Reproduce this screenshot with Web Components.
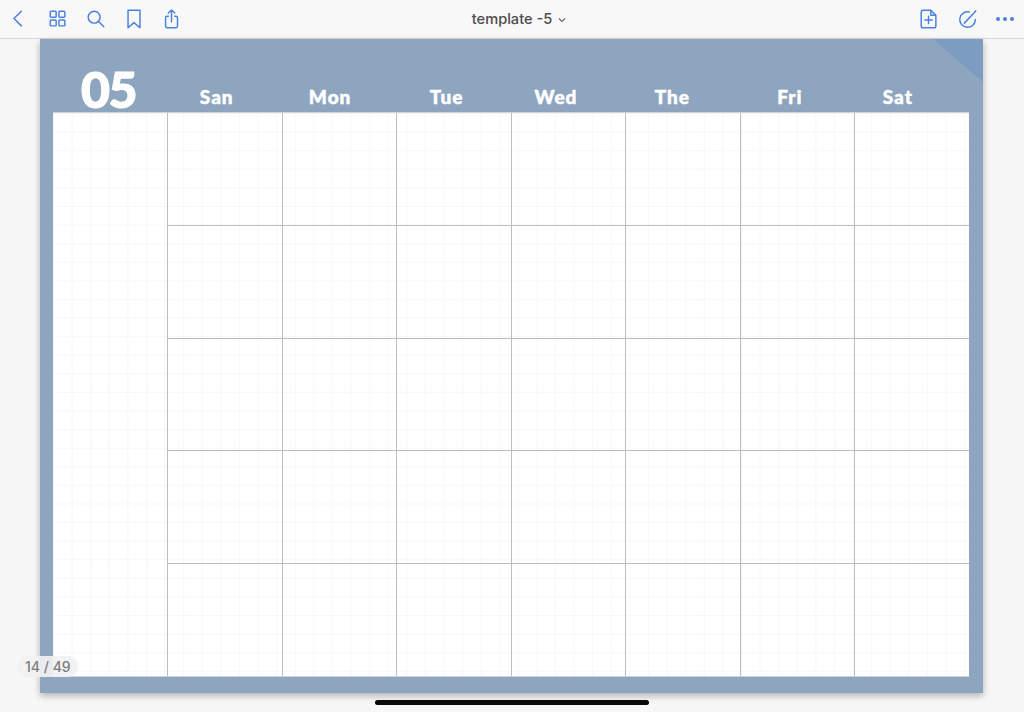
<!DOCTYPE html>
<html><head><meta charset="utf-8">
<style>
html,body{margin:0;padding:0;height:712px;overflow:hidden;background:#f7f7f7}
</style></head>
<body>
<pdf-viewer>
<tool-bar slot="bar" title-text="template -5"></tool-bar>
<cal-page month="05" days="San:17,Mon:19,Tue:15,Wed:25,The:21,Fri:15,Sat:28"></cal-page>
</pdf-viewer>
<script>
const ICONS={
back:'<path d="M14.500 3.500 6.500 11.500 14.500 19.500"/>',
grid:'<rect x="3.500" y="3.500" width="6.500" height="6.500" rx="1"/><rect x="13" y="3.500" width="6.500" height="6.500" rx="1"/><rect x="3.500" y="13" width="6.500" height="6.500" rx="1"/><rect x="13" y="13" width="6.500" height="6.500" rx="1"/>',
search:'<circle cx="10" cy="10" r="6.500"/><path d="M14.800 14.800 20.500 20.500"/>',
bookmark:'<path d="M5.500 2.500H18.500V21.500L12 16 5.500 21.500Z"/>',
share:'<path d="M8 9H6.500A1.500 1.500 0 0 0 5 10.500V20A1.500 1.500 0 0 0 6.500 21.500H16.500A1.500 1.500 0 0 0 18 20V10.500A1.500 1.500 0 0 0 16.500 9H15M11.500 15V2.500M8 5.500 11.500 2.200 15 5.500"/>',
add:'<path d="M5.500 2.500H14L19.500 8V19.500A2 2 0 0 1 17.500 21.500H5.500A2 2 0 0 1 3.500 19.500V4.500A2 2 0 0 1 5.500 2.500ZM14 2.500V8H19.500M11.500 9V17M7.500 13H15.500"/>',
pen:'<path d="M13.500 4.300A8.500 8.500 0 1 0 20 12.500M8 16.500 18.500 5.500 20.500 3"/>',
};
class ToolIcon extends HTMLElement{
  connectedCallback(){
    const n=this.getAttribute('name'),w=this.getAttribute('size')||22;
    this.attachShadow({mode:'open'}).innerHTML=`<style>
:host{display:block;width:${w}px;height:${w}px;flex:none}
svg{display:block;width:100%;height:100%;fill:none;stroke:#4a80e0;stroke-width:1.600;stroke-linecap:round;stroke-linejoin:round}
</style><svg viewBox="0 0 24 24">${ICONS[n]}</svg>`;
  }
}
customElements.define('tool-icon',ToolIcon);

class ToolBar extends HTMLElement{
  connectedCallback(){
    this.attachShadow({mode:'open'}).innerHTML=`<style>
:host{display:grid;grid-template-columns:1fr auto 1fr;align-items:center;height:38px;background:#f8f8f8;border-bottom:1px solid #d8d8d8;box-sizing:content-box;font-family:Inter,"Liberation Sans",sans-serif}
.l,.r{display:flex;align-items:center}
.l{padding-left:8px;gap:16px}
.l tool-icon:nth-child(2){margin-left:1px}
.r{justify-content:flex-end;padding-right:9px;gap:17px}
.t{font-size:14.600px;font-weight:500;color:#4d4d4d;display:flex;align-items:center;gap:6px;padding-left:14px}
.t svg{width:8px;height:6px;fill:none;stroke:#666;stroke-width:1.100;margin-top:1px}
.dots{display:flex;gap:3px;width:19px}
.dots i{width:4px;height:4px;border-radius:50%;background:#4a80e0;display:block}
</style>
<div class="l">
<tool-icon name="back"></tool-icon><tool-icon name="grid"></tool-icon><tool-icon name="search"></tool-icon><tool-icon name="bookmark"></tool-icon><tool-icon name="share"></tool-icon>
</div>
<div class="t">${this.getAttribute('title-text')}<svg viewBox="0 0 8 6"><path d="M1 1.500 4 4.500 7 1.500"/></svg></div>
<div class="r"><tool-icon name="add"></tool-icon><tool-icon name="pen"></tool-icon><div class="dots"><i></i><i></i><i></i></div></div>`;
  }
}
customElements.define('tool-bar',ToolBar);

class CalGrid extends HTMLElement{
  connectedCallback(){
    let cells='<div class="side"></div>';
    for(let r=0;r<5;r++)for(let c=0;c<7;c++)cells+=`<div class="cell${r==4?' lr':''}${c==6?' lc':''}"></div>`;
    this.attachShadow({mode:'open'}).innerHTML=`<style>
:host{display:grid;grid-template-columns:115px 115px 114px 115px 114px 115px 114px 114px;grid-template-rows:113px 113px 112px 113px 1fr;width:916px;height:563px;flex:none;box-sizing:border-box;background-color:#fff;box-shadow:0 -1px 0 #cdd3da,0 1px 0 #cdd3da;
background-image:linear-gradient(#f7f7f7 1px,transparent 1px),linear-gradient(90deg,#f7f7f7 1px,transparent 1px);background-size:18.600px 18.600px}
.side{grid-row:1/6;border-right:1px solid #bdbdbd}
.cell{border-right:1px solid #bdbdbd;border-bottom:1px solid #bdbdbd}
.lc{border-right:0}
.lr{border-bottom:0}
</style>${cells}`;
  }
}
customElements.define('cal-grid',CalGrid);

class CalPage extends HTMLElement{
  connectedCallback(){
    const days=this.getAttribute('days').split(',').map(d=>d.split(':'));
    this.attachShadow({mode:'open'}).innerHTML=`<style>
:host{display:flex;flex-direction:column;position:relative;width:943px;height:654px;margin-left:40px;background:#8ea5bf;box-shadow:0 3px 7px rgba(0,0,0,.28);padding:0 14px 17px 13px;box-sizing:border-box;font-family:Lato,"Open Sans",sans-serif;color:#fff}
.head{display:grid;grid-template-columns:115px repeat(7,1fr);height:74px;width:916px;align-items:end;flex:none}
.m{font-size:50px;font-weight:900;line-height:1;text-align:right;padding-right:32px;margin-bottom:-1px;-webkit-text-stroke:1.200px #fff;letter-spacing:-1.500px}
.d{font-size:19px;font-weight:900;text-align:center;line-height:1;margin-bottom:7px;letter-spacing:1px;-webkit-text-stroke:.5px #fff}
.corner{position:absolute;top:0;right:0;width:50px;height:43px;background:#7c9cc2;clip-path:polygon(0 0,100% 0,100% 100%)}
</style>
<div class="corner"></div>
<div class="head"><div class="m">${this.getAttribute('month')}</div>
${days.map(([n,p])=>`<div class="d" style="padding-right:${p}px">${n}</div>`).join('')}
</div>
<cal-grid></cal-grid>`;
  }
}
customElements.define('cal-page',CalPage);

class PagePill extends HTMLElement{
  connectedCallback(){
    this.attachShadow({mode:'open'}).innerHTML=`<style>
:host{position:absolute;left:17px;top:656px;height:21px;padding:0 7px 0 8px;border-radius:10px;background:rgba(241,241,242,.92);color:#7d7d7d;font:500 14px/21px Inter,"Liberation Sans",sans-serif}
</style><slot></slot>`;
  }
}
customElements.define('page-pill',PagePill);

class HomeBar extends HTMLElement{
  connectedCallback(){
    this.attachShadow({mode:'open'}).innerHTML=`<style>
:host{position:absolute;left:375px;top:700px;width:274px;height:5px;border-radius:3px;background:#0a0a0a}
</style>`;
  }
}
customElements.define('home-bar',HomeBar);

class PdfViewer extends HTMLElement{
  connectedCallback(){
    this.attachShadow({mode:'open'}).innerHTML=`<style>
:host{display:flex;flex-direction:column;position:relative;width:1024px;height:712px;overflow:hidden;background:#f7f7f7}
</style><slot name="bar"></slot><slot></slot><page-pill>14 / 49</page-pill><home-bar></home-bar>`;
  }
}
customElements.define('pdf-viewer',PdfViewer);
</script>
</body></html>
